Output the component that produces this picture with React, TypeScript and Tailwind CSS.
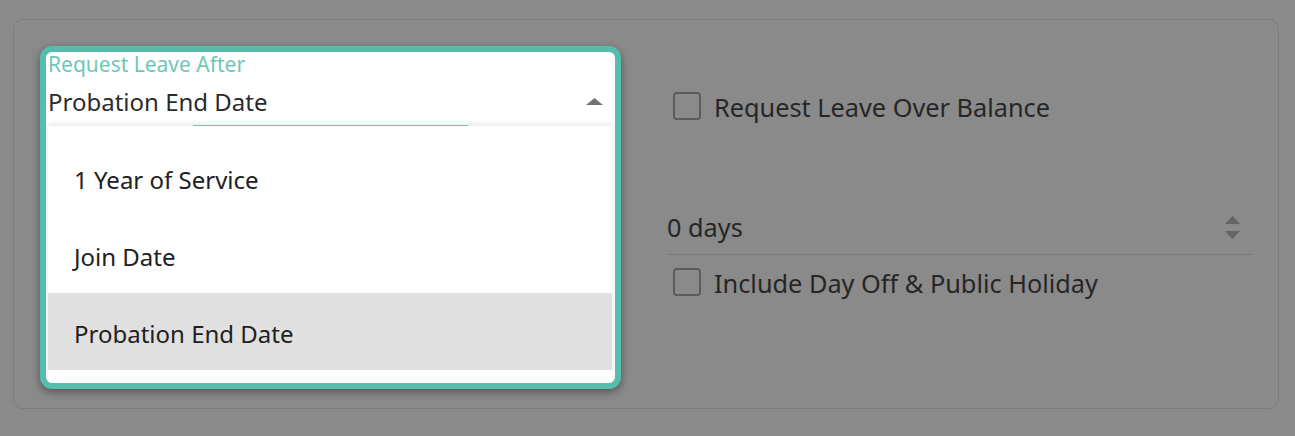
import React from "react"

const options = ["1 Year of Service", "Join Date", "Probation End Date"]

function Checkbox({ label }: { label: string }) {
  return (
    <label className="flex h-[28px] items-center">
      <span className="ml-[6px] h-[28px] w-[28px] rounded-[4px] border-2 border-[#5c5c5c]" />
      <span className="ml-[13px] pt-[2px] text-[25.3px] leading-[28px] text-[#262626]">{label}</span>
    </label>
  )
}

export default function App() {
  const selected = "Probation End Date"

  return (
    <div className="h-[436px] w-full bg-[#8a8a8a] pl-[13px] pt-[19px] font-['Noto_Sans',sans-serif]">
      <div className="flex h-[390px] w-[1266px] items-start rounded-[10px] border border-[#7c7c7c] pl-[26px] pt-[26px]">
        {/* highlighted select, open */}
        <div className="h-[343px] w-[581px] shrink-0 overflow-hidden rounded-[12px] border-[6px] border-[#56bcab] bg-white shadow-[0_3px_8px_rgba(0,0,0,0.4)]">
          <div className="pl-[2px] text-[21px] leading-[24px] text-[#6fc7b6]">Request Leave After</div>
          <div className="mt-[10px] flex items-center justify-between pl-[2px] pr-[12px]">
            <span className="text-[24px] leading-[32px] text-[#2b2b2b]">{selected}</span>
            <svg width="17" height="7" viewBox="0 0 17 7" className="mb-[2px]">
              <polygon points="0,7 8.5,0 17,7" fill="#727272" />
            </svg>
          </div>
          <div className="mt-[7px] ml-[147px] h-[1px] w-[275px] bg-[#7fcdbf]" />
          <div className="ml-[2px] mr-[3px] bg-white pt-[13px] shadow-[0_-2px_6px_rgba(0,0,0,0.1)]">
            {options.map((o) => (
              <div
                key={o}
                className={`flex h-[77px] items-center pl-[26px] pt-[5px] text-[24px] text-[#212121] ${
                  o === selected ? "bg-[#e0e0e0]" : ""
                }`}
              >
                {o}
              </div>
            ))}
            <div className="h-[14px]" />
          </div>
        </div>

        {/* dimmed fields behind */}
        <div className="ml-[46px] flex w-[585px] flex-col">
          <div className="mt-[46px]">
            <Checkbox label="Request Leave Over Balance" />
          </div>
          <div className="mt-[90px] flex items-center justify-between border-b border-[#7a7a7a] pb-[10px] pr-[12px]">
            <span className="text-[25.3px] leading-[34px] text-[#262626]">0 days</span>
            <svg width="15" height="23" viewBox="0 0 15 23">
              <polygon points="0,8 7.5,0 15,8" fill="#656565" />
              <polygon points="0,15 7.5,23 15,15" fill="#656565" />
            </svg>
          </div>
          <div className="mt-[13px]">
            <Checkbox label="Include Day Off & Public Holiday" />
          </div>
        </div>
      </div>
    </div>
  )
}
